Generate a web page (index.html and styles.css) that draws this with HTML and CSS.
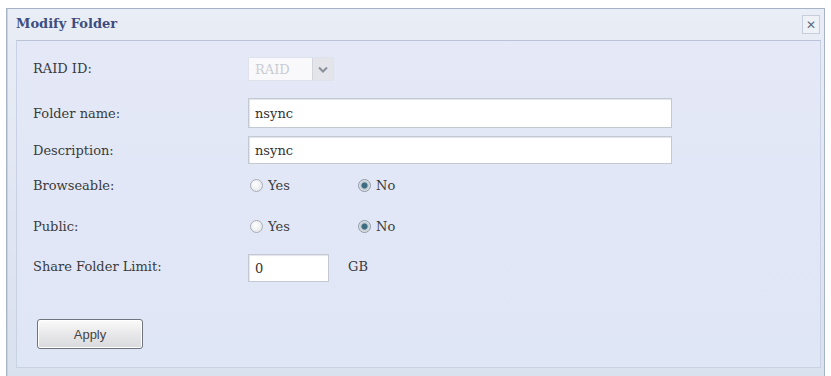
FILE: index.html
```html
<!DOCTYPE html>
<html>
<head>
<meta charset="utf-8">
<link rel="stylesheet" href="styles.css">
</head>
<body>
<div class="window">
  <div class="titlebar">
    <span class="title">Modify Folder</span>
    <span class="close">✕</span>
  </div>
  <div class="panel">
    <div class="form">
      <div class="row r1">
        <span class="label">RAID ID:</span>
        <div class="select"><span class="sel-text">RAID</span><span class="sel-btn"><svg width="10" height="7" viewBox="0 0 10 7"><path d="M1 1.5 L5 5.5 L9 1.5" fill="none" stroke="#8a8f99" stroke-width="2"/></svg></span></div>
      </div>
      <div class="row r2">
        <span class="label">Folder name:</span>
        <div class="input wide">nsync</div>
      </div>
      <div class="row r3">
        <span class="label">Description:</span>
        <div class="input wide short">nsync</div>
      </div>
      <div class="row r4">
        <span class="label">Browseable:</span>
        <div class="radios">
          <span class="opt"><span class="radio"></span>Yes</span>
          <span class="opt"><span class="radio on"></span>No</span>
        </div>
      </div>
      <div class="row r5">
        <span class="label">Public:</span>
        <div class="radios">
          <span class="opt"><span class="radio"></span>Yes</span>
          <span class="opt"><span class="radio on"></span>No</span>
        </div>
      </div>
      <div class="row r6">
        <span class="label">Share Folder Limit:</span>
        <div class="limit"><div class="input small">0</div><span class="unit">GB</span></div>
      </div>
    </div>
    <div class="actions">
      <button class="apply">Apply</button>
    </div>
  </div>
</div>
</body>
</html>
```

FILE: styles.css
```css
html, body {
  margin: 0;
  padding: 0;
  background: #ffffff;
}
body {
  font-family: "DejaVu Serif", "Liberation Serif", serif;
  font-size: 13px;
  color: #3a3a3a;
  padding: 8px 6px 0 6px;
  height: 376px;
  box-sizing: border-box;
  overflow: hidden;
}
.window {
  height: 376px;
  box-sizing: border-box;
  border: 1px solid #a7b3c6;
  border-bottom: none;
  background: linear-gradient(#e9edf5, #d9e1ee);
  padding: 0 3px 4px 9px;
  display: flex;
  flex-direction: column;
  box-shadow: inset 1px 0 0 #c8d2e2;
}
.titlebar {
  height: 31px;
  display: flex;
  align-items: center;
  justify-content: space-between;
  flex: none;
}
.title {
  font-weight: bold;
  color: #3d4d80;
  font-size: 13px;
  margin-top: -2px;
}
.close {
  width: 16px;
  height: 17px;
  display: flex;
  align-items: center;
  justify-content: center;
  background: #eef2f7;
  border: 1px solid #c5cfdc;
  color: #5e6b7d;
  font-family: "DejaVu Sans", sans-serif;
  font-size: 12px;
  font-weight: bold;
  margin-right: 1px;
}
.panel {
  height: 328px;
  flex: none;
  box-sizing: border-box;
  background: linear-gradient(#e4e8f7, #dfe6f6);
  border: 1px solid #c9d2e4;
  border-top-color: #b9c4d8;
  padding: 5px 16px 0 16px;
  display: flex;
  flex-direction: column;
}
.form {
  display: grid;
  grid-template-columns: 215px 1fr;
  grid-template-rows: 44px 46px 28px 42px 40px 40px;
}
.row {
  display: contents;
}
.label {
  align-self: center;
  color: #3b3b3b;
}
.select {
  align-self: center;
  display: flex;
  width: 86px;
  height: 24px;
  box-sizing: border-box;
  border: 1px solid #dfe2ea;
  background: #f4f5f8;
  margin-top: 2px;
}
.sel-text {
  flex: 1;
  color: #c9ccd3;
  display: flex;
  align-items: center;
  padding-left: 6px;
  background: #f9f9fb;
}
.sel-btn {
  width: 20px;
  background: #e3e5eb;
  border-left: 1px solid #d2d5dd;
  display: flex;
  align-items: center;
  justify-content: center;
}
.input {
  align-self: center;
  box-sizing: border-box;
  background: #ffffff;
  border: 1px solid #c3c8d3;
  box-shadow: inset 1px 1px 1px #e2e5ea;
  padding-left: 6px;
  display: flex;
  align-items: center;
  color: #333;
}
.wide {
  width: 424px;
  height: 30px;
}
.short { height: 28px; }
.radios {
  align-self: center;
  display: flex;
  padding-left: 2px;
}
.opt {
  display: flex;
  align-items: center;
  gap: 5px;
  width: 108px;
  color: #3b3b3b;
}
.radio {
  width: 13px;
  height: 13px;
  border-radius: 50%;
  box-sizing: border-box;
  border: 1px solid #a8adb6;
  background: radial-gradient(circle at 40% 40%, #ffffff, #dde0e5);
}
.radio.on {
  border-color: #8f98a6;
  background: radial-gradient(circle, #3d6c80 0 2.5px, #b9c6cf 3.5px, #eef0f3 6px);
}
.limit {
  align-self: center;
  display: flex;
  align-items: center;
  margin-top: 4px;
}
.small {
  width: 81px;
  height: 28px;
}
.unit {
  margin-left: 19px;
  color: #3b3b3b;
  margin-top: -3px;
}
.actions {
  margin-top: 33px;
  padding-left: 4px;
}
.apply {
  width: 106px;
  height: 30px;
  border: 1px solid #6f757f;
  border-radius: 3px;
  background: linear-gradient(#fbfbfb, #e8e8ea 50%, #d9dadd);
  font-family: "Liberation Sans", Arial, sans-serif;
  font-size: 13px;
  color: #444;
  padding: 0;
  box-shadow: inset 0 0 0 1px #ffffff;
}
```
